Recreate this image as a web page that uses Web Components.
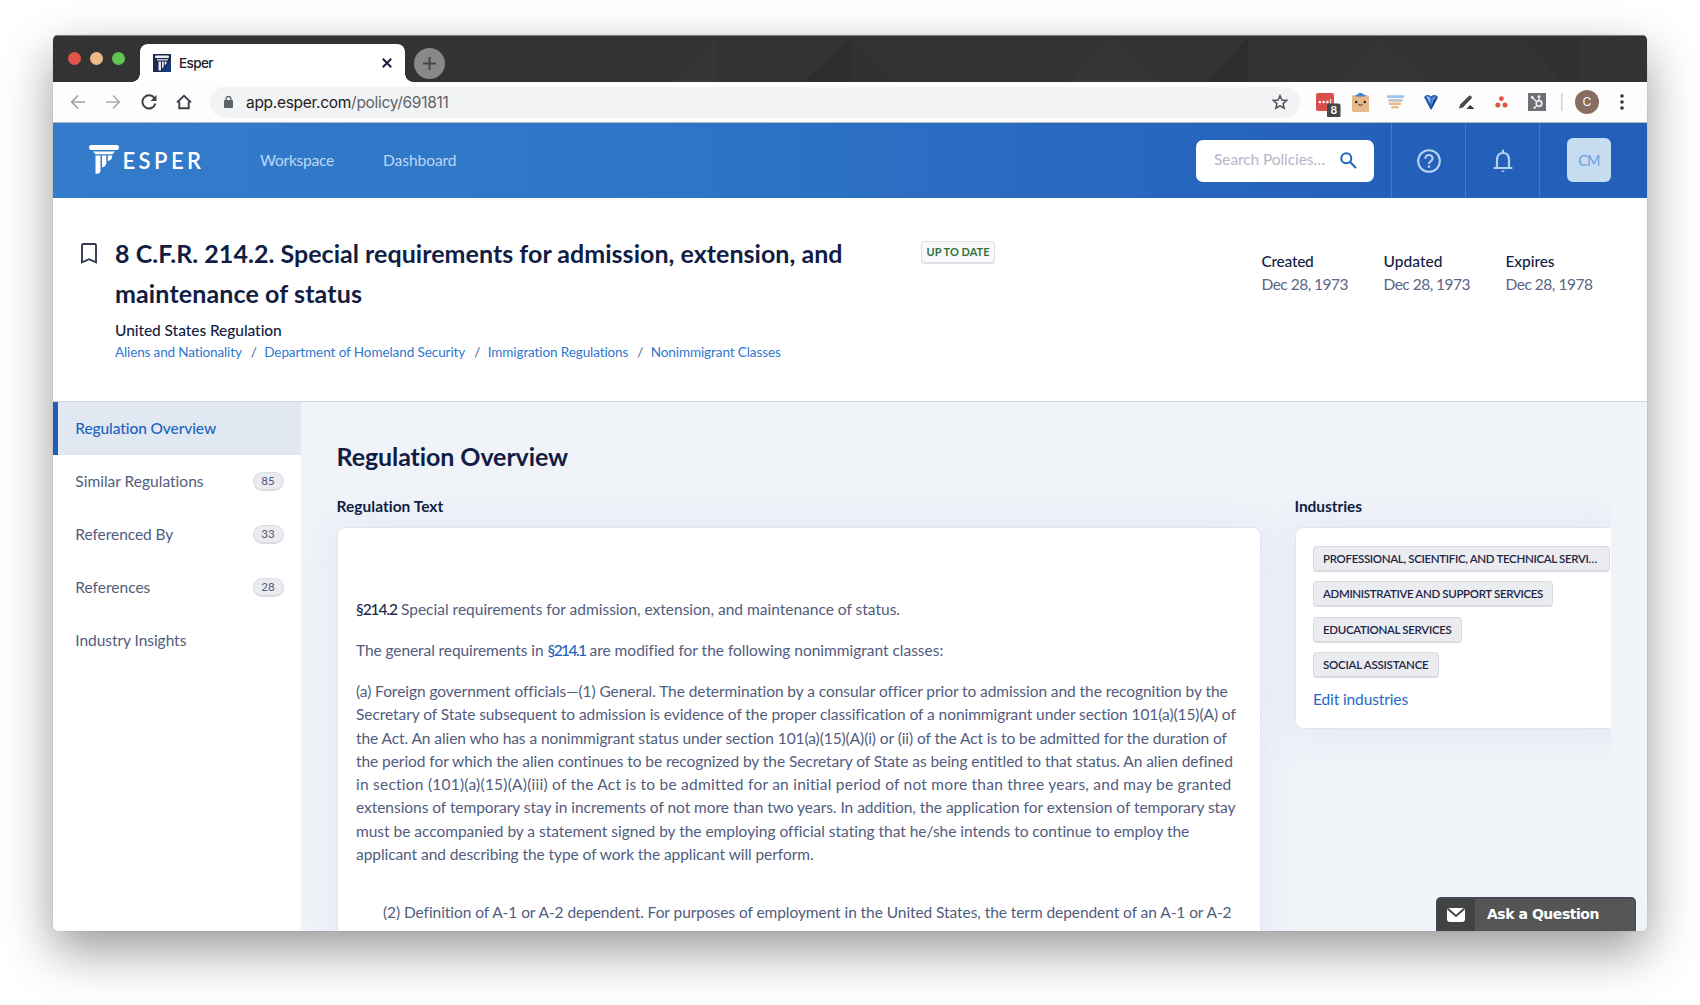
<!DOCTYPE html>
<html lang="en">
<head>
<meta charset="utf-8">
<title>Esper</title>
<style>
  html, body { margin: 0; height: 100%; overflow: hidden; background: #fff; }
  body { font-family: Lato, "Open Sans", sans-serif; font-size: 15.5px; color: #525c7e; padding: 35px 53px 0; box-sizing: border-box; }
</style>
</head>
<body>
<browser-window>
  <tab-strip></tab-strip>
  <tool-bar></tool-bar>
  <app-header></app-header>
  <policy-head></policy-head>
  <policy-body>
    <side-nav slot="nav">
      <nav-item active><t-fit w="141">Regulation Overview</t-fit></nav-item>
      <nav-item count="85"><t-fit w="128.5">Similar Regulations</t-fit></nav-item>
      <nav-item count="33"><t-fit w="98">Referenced By</t-fit></nav-item>
      <nav-item count="28"><t-fit w="75">References</t-fit></nav-item>
      <nav-item><t-fit w="111">Industry Insights</t-fit></nav-item>
    </side-nav>
    <regulation-text></regulation-text>
    <industry-list slot="aside">
      <industry-chip><t-fit w="274">PROFESSIONAL, SCIENTIFIC, AND TECHNICAL SERVI…</t-fit></industry-chip>
      <industry-chip><t-fit w="220">ADMINISTRATIVE AND SUPPORT SERVICES</t-fit></industry-chip>
      <industry-chip><t-fit w="128.5">EDUCATIONAL SERVICES</t-fit></industry-chip>
      <industry-chip><t-fit w="105.5">SOCIAL ASSISTANCE</t-fit></industry-chip>
    </industry-list>
  </policy-body>
  <ask-button slot="float"></ask-button>
</browser-window>

<script>
const html = String.raw;

function define(name, markup) {
  customElements.define(name, class extends HTMLElement {
    constructor() {
      super();
      this.attachShadow({ mode: "open" }).innerHTML = markup;
    }
  });
}

define("browser-window", html`
  <style>
    :host { display: block; position: relative; width: 1594px; height: 896px; border-radius: 5px 5px 6px 6px;
      box-shadow: 0 0 1px rgba(0,0,0,.35), 0 20px 50px rgba(0,0,0,.4); }
    .frame { display: flex; flex-direction: column; height: 100%; overflow: hidden; border-radius: inherit; background: #fff; }
    .float { position: absolute; right: 11px; bottom: 0; }
  </style>
  <div class="frame"><slot></slot></div>
  <div class="float"><slot name="float"></slot></div>
`);

define("tab-strip", html`
  <style>
    :host { display: flex; flex: none; height: 47px; background: #333; color: #202124; box-sizing: border-box; border-top: 1px solid #7b7f7d; font-family: Inter, Roboto, sans-serif; }
    .lights { display: flex; gap: 9px; padding: 16px 0 0 15px; width: 72px; box-sizing: border-box; }
    .lights i { width: 13px; height: 13px; border-radius: 50%; }
    .tab { display: flex; align-items: center; position: relative; margin-top: 8px; margin-left: 15px; width: 265px; height: 38px; background: #fff; border-radius: 8px 8px 0 0; box-sizing: border-box; padding: 0 13px; }
    .tab::before, .tab::after { content: ""; position: absolute; bottom: 0; width: 8px; height: 8px; }
    .tab::before { left: -8px; background: radial-gradient(circle at 0 0, transparent 7.5px, #fff 8px); }
    .tab::after { right: -8px; background: radial-gradient(circle at 100% 0, transparent 7.5px, #fff 8px); }
    .name { flex: 1; font-size: 13.5px; font-weight: 500; margin-left: 8px; }
    .plus { margin: 12px 0 0 9px; }
    svg { display: block; flex: none; }
  </style>
  <div class="lights"><i style="background:#e0564c"></i><i style="background:#ecba87"></i><i style="background:#5fc454"></i></div>
  <div class="tab">
    <svg width="18" height="18" viewBox="0 0 18 18">
      <rect width="18" height="18" fill="#1f2a50"/><path d="M8 18L18 7V18Z" fill="#163a82"/>
      <rect x="2" y="1.5" width="14" height="2.5" rx="1" fill="#e8edf4"/><rect x="4" y="5" width="11" height="1.5" fill="#b9c4d8"/>
      <path d="M5.5 7.5H8V16.5L5.5 16.5ZM9 7.5H10.7V13L9 14.5ZM11.6 7.5H13.5V10L11.6 11Z" fill="#dfe6f0"/>
    </svg>
    <div class="name"><t-fit w="34">Esper</t-fit></div>
    <svg width="10" height="10" viewBox="0 0 10 10" stroke="#1b1f3a" stroke-width="2"><path d="M.8.8L9.2 9.2M9.2.8L.8 9.2"/></svg>
  </div>
  <svg class="plus" width="31" height="31" viewBox="0 0 31 31"><circle cx="15.5" cy="15.5" r="15.5" fill="#888"/><path d="M15.5 9V22M9 15.5H22" stroke="#444" stroke-width="2"/></svg>
  <svg width="1202" height="46" viewBox="445 0 1202 46">
    <path d="M716 2V46H672ZM1115 2L1070 46H1160ZM1380 2L1338 46H1425Z" fill="#363636"/>
    <path d="M850 2V46H804ZM1248 2V46H1206Z" fill="#2d2d2d"/>
    <path d="M850 2L897 46H850ZM1523 2H1580V46H1562Z" fill="#303030"/>
  </svg>
`);

define("tool-bar", html`
  <style>
    :host { display: flex; flex: none; align-items: center; height: 41px; box-sizing: border-box; background: #fdfdfe; border-bottom: 1px solid #b4b7bb; font-family: Inter, Roboto, sans-serif; color: #202124; }
    svg { display: block; flex: none; }
    .nav { display: flex; gap: 19.4px; padding-left: 17px; width: 157px; box-sizing: border-box; }
    .omni { display: flex; align-items: center; width: 1090px; height: 31px; border-radius: 16px; background: #f1f3f5; box-sizing: border-box; padding: 0 12px 0 14px; }
    .url { flex: 1; margin-left: 13px; font-size: 15.5px; white-space: nowrap; }
    .url span { color: #5f6368; }
    .ext { display: flex; align-items: center; margin-left: 16px; }
  </style>
  <div class="nav">
    <svg width="16" height="16" viewBox="0 0 16 16" fill="none" stroke="#9da1a9" stroke-width="1.7"><path d="M15 8H2M8 1.5L1.7 8L8 14.5"/></svg>
    <svg width="16" height="16" viewBox="0 0 16 16" fill="none" stroke="#a9adb4" stroke-width="1.7"><path d="M1 8H14M8 1.5L14.3 8L8 14.5"/></svg>
    <svg width="16" height="16" viewBox="0 0 16 16" fill="none" stroke="#3c4046" stroke-width="2"><path d="M13.6 4.4A6.6 6.6 0 1 0 14.4 9.6"/><path d="M15.5 1V7H9.5Z" fill="#3c4046" stroke="none"/></svg>
    <svg width="16" height="16" viewBox="0 0 16 16" fill="none" stroke="#3c4046" stroke-width="1.9"><path d="M1 8.4L8 1.8L15 8.4M3.3 7.5V14.3H12.7V7.5"/></svg>
  </div>
  <div class="omni">
    <svg width="9" height="12" viewBox="0 0 9 12"><rect y="4" width="9" height="8" rx="1" fill="#5f6368"/><path d="M2 5V3a2.5 2.5 0 0 1 5 0V5" fill="none" stroke="#5f6368" stroke-width="1.3"/></svg>
    <div class="url"><t-fit w="202.5">app.esper.com<span>/policy/691811</span></t-fit></div>
    <svg width="16" height="16" viewBox="0 0 16 16" fill="none" stroke="#4f5358" stroke-width="1.5"><path d="M8 1.6L9.9 6L14.7 6.4L11.1 9.6L12.2 14.2L8 11.8L3.8 14.2L4.9 9.6L1.3 6.4L6.1 6Z"/></svg>
  </div>
  <div class="ext">
    <svg width="26" height="30" viewBox="0 0 26 30">
      <rect y="6" width="18" height="18" rx="2" fill="#d9504a"/><g fill="#fff"><circle cx="3.8" cy="15" r="1.3"/><circle cx="7.6" cy="15" r="1.3"/><circle cx="11.4" cy="15" r="1.3"/><rect x="14.2" y="12" width="1" height="6"/></g>
      <rect x="11" y="16.5" width="13.5" height="14" rx="2" fill="#45474a"/><text x="17.8" y="27.4" font-size="10.5" font-weight="600" text-anchor="middle" fill="#fff">8</text>
    </svg>
    <svg style="margin-left:9.5px" width="17" height="19" viewBox="0 0 17 19"><rect y="2" width="17" height="17" rx="1.5" fill="#e8b888"/><path d="M4 1.5H6.5V0H10.5V1.5H13V3.5H4Z" fill="#3f7fc6"/><g fill="#20242e"><circle cx="4.2" cy="9" r="1.2"/><circle cx="12.8" cy="9" r="1.2"/></g><path d="M6.5 11.3Q8.5 13.5 10.5 11.3" fill="none" stroke="#20242e"/></svg>
    <svg style="margin-left:17px" width="19" height="14" viewBox="0 0 19 14" stroke-linecap="round" stroke-width="2.6"><path d="M2 1.6H17" stroke="#9cc4ea"/><path d="M3.5 5.4H15.5" stroke="#b9c4cc"/><path d="M4 8.7H14" stroke="#edbb85"/><path d="M6.5 12.3H11.5" stroke="#edbb85"/></svg>
    <svg style="margin-left:19px" width="14" height="16" viewBox="0 0 14 16"><path d="M0 3Q3-.5 7 2.5Q11-.5 14 3L7.5 15.5H6.5Z" fill="#2458ab"/><path d="M2.2 2.8Q4.5 1.5 6.5 4V10Z" fill="#8dbbec"/><path d="M7.5 4Q9.5 1.5 12 2.8L7.3 12Z" fill="#4c8bd8"/><path d="M9.5 7L13.8 3L7.3 15.3Z" fill="#123a78"/></svg>
    <svg style="margin-left:21px" width="16" height="15" viewBox="0 0 16 15"><path d="M0 13.5L1.2 9.5L9.8 1Q11 0 12.2 1.1Q13.4 2.3 12.4 3.5L3.8 12.4Z" fill="#46484b"/><path d="M7.5 14L11.2 10L15.5 14Z" fill="#36383b"/></svg>
    <svg style="margin-left:20.5px" width="13" height="12" viewBox="0 0 13 12" fill="#e0563f"><circle cx="6.4" cy="2.7" r="2.4"/><circle cx="2.8" cy="8.9" r="2.5"/><circle cx="10" cy="8.9" r="2.5"/></svg>
    <svg style="margin-left:20px" width="18" height="18" viewBox="0 0 18 18"><rect width="18" height="18" fill="#6d7075"/><g fill="none" stroke="#eef0f2" stroke-width="1.3"><circle cx="11" cy="10.5" r="2.8" stroke-width="1.7"/><path d="M11 7.5V4M9 9L4.3 4.5M9 12.5L6.5 15"/></g><g fill="#eef0f2"><circle cx="11" cy="3.6" r="1.4"/><circle cx="4.2" cy="4.4" r="1.4"/><circle cx="6.4" cy="14.8" r="1.1"/></g></svg>
    <svg style="margin-left:15px" width="2" height="18"><rect width="1.5" height="18" fill="#cfd1d5"/></svg>
    <svg style="margin-left:12px" width="24" height="24" viewBox="0 0 24 24"><circle cx="12" cy="12" r="12" fill="#8a6d61"/><text x="12" y="16.3" font-size="12" text-anchor="middle" fill="#fff">C</text></svg>
    <svg style="margin-left:21px" width="4" height="16" viewBox="0 0 4 16" fill="#33363b"><circle cx="2" cy="2" r="1.8"/><circle cx="2" cy="8" r="1.8"/><circle cx="2" cy="14" r="1.8"/></svg>
  </div>
`);

define("app-header", html`
  <style>
    :host { display: flex; flex: none; align-items: center; height: 75px; background: linear-gradient(90deg, #357bcb, #2f76c8 35%, #2460ba 85%); color: #bcd7f1; }
    svg { display: block; }
    .mark { margin: 0 0 2px 35.5px; }
    .brand { color: #fff; font-size: 22px; font-weight: 600; margin-left: 4px; line-height: 26px; width: 80px; padding-top: 1px; }
    nav { display: flex; gap: 49px; margin-left: 57.5px; flex: 1; font-size: 15.5px; padding-bottom: 2px; }
    .search { display: flex; align-items: center; justify-content: space-between; width: 178px; height: 42px; box-sizing: border-box; background: #fff; border-radius: 7px; padding: 0 17px 3px 18px; color: #b5b6c8; margin-right: 17px; }
    .search svg { position: relative; top: 1px; }
    .cell { display: flex; align-items: center; justify-content: center; width: 74px; height: 75px; box-sizing: border-box; border-left: 1px solid #3c7ccb; }
    .cell.user { width: 108px; padding-right: 9px; }
    .avatar { display: flex; align-items: center; justify-content: center; width: 44px; height: 44px; border-radius: 6px; background: #c6dcf0; color: #6ba0dc; font-size: 14.5px; margin-bottom: 1px; }
  </style>
  <svg class="mark" width="30" height="30" viewBox="0 0 30 30" fill="#fff">
    <path d="M2 0H28Q30 0 30 2.2Q30 5 27 5H3Q0 5 0 2.2Q0 0 2 0Z"/><path d="M4 6.5H26L23.5 9.2H6.5Z"/>
    <path d="M6.5 10.5H11.5V26Q11 29 6.5 29Z"/><path d="M13 10.5H17.3V18Q17 21.5 13 22.5Z"/><path d="M18.8 10.5H23.2Q23 15.5 18.8 16Z"/>
  </svg>
  <div class="brand"><t-fit w="82">ESPER</t-fit></div>
  <nav><t-fit w="74">Workspace</t-fit><t-fit w="73.5">Dashboard</t-fit></nav>
  <div class="search">
    <t-fit w="111">Search Policies…</t-fit>
    <svg width="17" height="17" viewBox="0 0 17 17" fill="none" stroke="#1f63bd" stroke-width="2"><circle cx="6.3" cy="6.3" r="5"/><path d="M9.8 9.8L16 16"/></svg>
  </div>
  <div class="cell"><svg width="24" height="24" viewBox="0 0 24 24" fill="none" stroke="#b3d2f0" stroke-width="2.1"><circle cx="12" cy="12" r="10.8"/><path d="M8.4 9.7C8.4 4.7 15.6 4.9 15.6 9.4C15.6 12 12 12 12 15"/><path d="M12 16.6V18.8" stroke-width="2.3"/></svg></div>
  <div class="cell"><svg width="20" height="24" viewBox="0 0 20 24" fill="none" stroke="#b3d2f0" stroke-width="2.2"><path d="M4 18.6V11C4 6.5 6.5 4 10 4S16 6.5 16 11V18.6"/><path d="M.6 19H19.4M10 .8V4"/><path d="M8 21.4H12L10 23.4Z" fill="#b3d2f0" stroke="none"/></svg></div>
  <div class="cell user"><div class="avatar"><t-fit w="21.5">CM</t-fit></div></div>
`);

define("policy-head", html`
  <style>
    :host { display: flex; flex: none; height: 204px; box-sizing: border-box; border-bottom: 1px solid #d3d8de; background: #fff; padding: 35px 0 0 27.5px; color: #111d43; }
    .mark { display: block; margin: 10px 18.5px 0 0; flex: none; }
    .info { width: 806px; }
    h1 { margin: 0; font-size: 25px; font-weight: 700; line-height: 40px; }
    h1 t-fit { display: block; }
    .kind { line-height: 22px; margin-top: 5.5px; font-weight: 500; }
    .crumbs { display: flex; gap: 9px; font-size: 13.5px; line-height: 22px; color: #525c7e; }
    .crumbs a { color: #2f77cf; }
    .badge { width: 74px; height: 23px; box-sizing: border-box; border: 1px solid #dcdfe4; border-bottom-width: 2px; border-radius: 4px; background: #f7f9fb; color: #33713a; font-size: 11px; font-weight: 700; text-align: center; line-height: 20px; margin-top: 8px; }
    .dates { display: flex; margin-left: 266.5px; padding-top: 17px; }
    .dates div { width: 122px; line-height: 23.3px; }
    .dates b { display: block; font-weight: 500; }
    .dates span { display: block; color: #5b6585; }
  </style>
  <svg class="mark" width="16" height="21" viewBox="0 0 16 21" fill="none" stroke="#33394d" stroke-width="1.9"><path d="M1 19.3V2.2Q1 1 2.2 1H13.8Q15 1 15 2.2V19.3L8 16.2Z"/></svg>
  <div class="info">
    <h1><t-fit w="727.5">8 C.F.R. 214.2. Special requirements for admission, extension, and</t-fit><t-fit w="247">maintenance of status</t-fit></h1>
    <div class="kind"><t-fit w="167">United States Regulation</t-fit></div>
    <div class="crumbs"><a><t-fit w="127">Aliens and Nationality</t-fit></a><t-fit w="4.5">/</t-fit><a><t-fit w="201">Department of Homeland Security</t-fit></a><t-fit w="4.5">/</t-fit><a><t-fit w="141">Immigration Regulations</t-fit></a><t-fit w="4.5">/</t-fit><a><t-fit w="130">Nonimmigrant Classes</t-fit></a></div>
  </div>
  <div class="badge"><t-fit w="63">UP TO DATE</t-fit></div>
  <div class="dates">
    <div><b><t-fit w="52">Created</t-fit></b><span><t-fit w="86.5">Dec 28, 1973</t-fit></span></div>
    <div><b><t-fit w="59">Updated</t-fit></b><span><t-fit w="86.5">Dec 28, 1973</t-fit></span></div>
    <div><b><t-fit w="49">Expires</t-fit></b><span><t-fit w="87">Dec 28, 1978</t-fit></span></div>
  </div>
`);

define("policy-body", html`
  <style>
    :host { display: flex; flex: 1; min-height: 0; background: #f0f3f8; }
    main { display: flex; gap: 34px; flex: 1; min-width: 0; margin-right: 36px; padding-left: 35.5px; overflow: hidden; }
  </style>
  <slot name="nav"></slot>
  <main><slot></slot><slot name="aside"></slot></main>
`);

define("side-nav", html`
  <style>:host { display: block; flex: none; width: 248px; background: #fff; }</style>
  <slot></slot>
`);

customElements.define("nav-item", class extends HTMLElement {
  constructor() {
    super();
    const count = this.getAttribute("count");
    this.attachShadow({ mode: "open" }).innerHTML = html`
      <style>
        :host { display: flex; align-items: center; justify-content: space-between; height: 53.1px; box-sizing: border-box; border-left: 5px solid transparent; padding: 0 17.5px 0 17.3px; }
        :host([active]) { background: #e1e8f1; border-color: #1f5fba; color: #1c63bf; font-weight: 500; }
        ::slotted(t-fit) { margin-bottom: 2px; }
        .count { width: 31px; height: 19px; box-sizing: border-box; border: 1px solid #d9dce2; border-bottom-width: 2px; border-radius: 10px; background: #ebecf0; font-size: 11.5px; font-weight: 500; line-height: 15px; text-align: center; }
      </style>
      <slot></slot>
      ${count ? `<div class="count">${count}</div>` : ""}
    `;
  }
});

define("regulation-text", html`
  <style>
    :host { display: block; flex: none; width: 924px; color: #525c7e; }
    h2 { margin: 34px 0 0; font-size: 25px; line-height: 40px; color: #111d43; }
    h3 { margin: 17.5px 0 0; font-size: 15.5px; line-height: 24px; color: #111d43; }
    .card { margin-top: 9.5px; height: 420px; box-sizing: border-box; background: #fff; border: 1px solid #dfe6f0; border-radius: 8px; padding: 70px 18.5px 0; box-shadow: 0 2px 40px rgba(180,200,240,.28); }
    p { margin: 0 0 17.7px; line-height: 23.3px; }
    .lines t-fit { display: block; }
    .line { display: flex; gap: 4px; }
    .sub { padding-left: 27px; margin-top: 35px; }
    b { font-weight: 500; color: #1b2850; }
    a { font-weight: 500; color: #1f63bd; }
  </style>
  <h2><t-fit w="232">Regulation Overview</t-fit></h2>
  <h3><t-fit w="107">Regulation Text</t-fit></h3>
  <div class="card">
    <p class="line"><b><t-fit w="41">§214.2</t-fit></b><t-fit w="499">Special requirements for admission, extension, and maintenance of status.</t-fit></p>
    <p class="line"><t-fit w="187.5">The general requirements in</t-fit><a><t-fit w="38">§214.1</t-fit></a><t-fit w="353.5">are modified for the following nonimmigrant classes:</t-fit></p>
    <p class="lines">
      <t-fit w="870.5">(a) Foreign government officials—(1) General. The determination by a consular officer prior to admission and the recognition by the</t-fit>
      <t-fit w="880">Secretary of State subsequent to admission is evidence of the proper classification of a nonimmigrant under section 101(a)(15)(A) of</t-fit>
      <t-fit w="871">the Act. An alien who has a nonimmigrant status under section 101(a)(15)(A)(i) or (ii) of the Act is to be admitted for the duration of</t-fit>
      <t-fit w="877">the period for which the alien continues to be recognized by the Secretary of State as being entitled to that status. An alien defined</t-fit>
      <t-fit w="875.5">in section (101)(a)(15)(A)(iii) of the Act is to be admitted for an initial period of not more than three years, and may be granted</t-fit>
      <t-fit w="880">extensions of temporary stay in increments of not more than two years. In addition, the application for extension of temporary stay</t-fit>
      <t-fit w="833">must be accompanied by a statement signed by the employing official stating that he/she intends to continue to employ the</t-fit>
      <t-fit w="457.5">applicant and describing the type of work the applicant will perform.</t-fit>
    </p>
    <p class="sub"><t-fit w="848.5">(2) Definition of A-1 or A-2 dependent. For purposes of employment in the United States, the term dependent of an A-1 or A-2</t-fit></p>
  </div>
`);

define("industry-list", html`
  <style>
    :host { display: block; flex: none; width: 330px; }
    h3 { margin: 91.5px 0 0; font-size: 15.5px; line-height: 24px; color: #111d43; }
    .card { display: flex; flex-direction: column; align-items: flex-start; gap: 9.4px; margin-top: 9.5px; height: 202px; box-sizing: border-box; background: #fff; border: 1px solid #dfe6f0; border-radius: 8px; padding: 18px 17.5px; box-shadow: 0 2px 40px rgba(180,200,240,.28); }
    a { color: #1f68c4; line-height: 24px; margin-top: -1px; }
  </style>
  <h3><t-fit w="67.5">Industries</t-fit></h3>
  <div class="card"><slot></slot><a><t-fit w="95">Edit industries</t-fit></a></div>
`);

define("industry-chip", html`
  <style>
    :host { display: block; height: 26px; box-sizing: border-box; padding: 0 9px; border: 1px solid #d8dbe1; border-bottom-width: 2px; border-radius: 4px; background: #ebecf0; color: #1d2647; font-size: 11.5px; font-weight: 600; line-height: 23px; }
    :host(:first-child) { padding-right: 12px; }
  </style>
  <slot></slot>
`);

define("ask-button", html`
  <style>
    :host { display: flex; width: 200px; height: 34px; box-sizing: border-box; overflow: hidden; border: 1px solid #45475a; border-width: 2px 1px 0; border-radius: 5px 5px 0 0; background: #555; color: #fff; font: bold 14px/30px "DejaVu Sans", sans-serif; }
    .icon { display: flex; align-items: center; justify-content: center; width: 38px; background: #424345; padding-bottom: 1px; box-sizing: border-box; }
    .text { margin-left: 12px; }
  </style>
  <div class="icon"><svg width="18" height="14" viewBox="0 0 18 14"><rect width="18" height="14" rx="3" fill="#fff"/><path d="M1 1L9 8L17 1" fill="none" stroke="#424345" stroke-width="2"/></svg></div>
  <div class="text"><t-fit w="112">Ask a Question</t-fit></div>
`);

// Tracks a line of text so that it runs exactly w pixels wide.
customElements.define("t-fit", class extends HTMLElement {
  constructor() {
    super();
    this.attachShadow({ mode: "open" }).innerHTML = html`<style>:host { display: inline-block; white-space: nowrap; }</style><span><slot></slot></span>`;
  }

  connectedCallback() {
    const natural = this.shadowRoot.querySelector("span").getBoundingClientRect().width;
    const spacing = (Number(this.getAttribute("w")) - natural) / this.textContent.length;
    this.style.letterSpacing = spacing.toFixed(3) + "px";
  }
});
</script>
</body>
</html>
